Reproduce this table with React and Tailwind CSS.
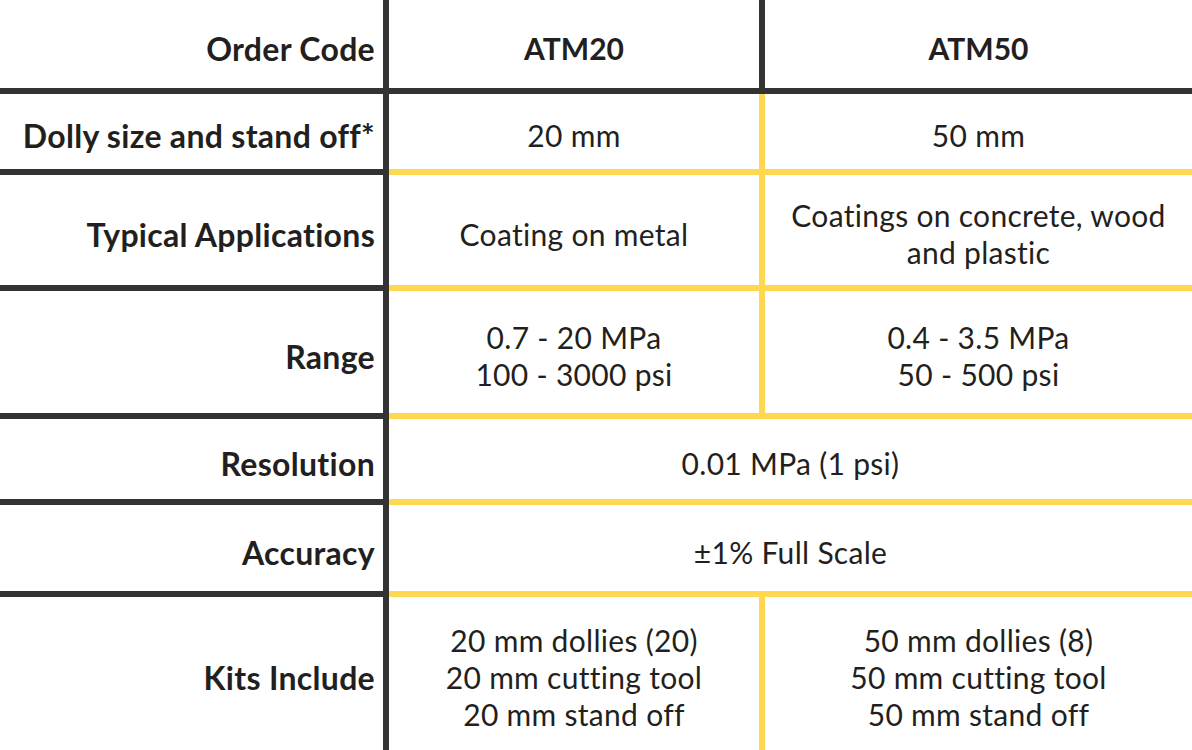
import React from 'react';

const dark = 'border-[#333333]';
const yellow = 'border-[#ffd84f]';

function Label({ children, last }) {
  return (
    <div
      className={`flex items-center justify-end pr-[8px] pt-[8px] border-r-[6px] ${dark} ${last ? '' : 'border-b-[6px]'} font-bold text-[32px] tracking-[0.3px] leading-[37px] text-right`}
    >
      {children}
    </div>
  );
}

function Cell({ children, right, span, last, head }) {
  const border = head ? dark : yellow;
  return (
    <div
      className={`flex items-center justify-center text-center pt-[8px] ${span ? 'col-span-2' : ''} ${right ? 'border-r-[6px]' : ''} ${last ? '' : 'border-b-[6px]'} ${border} ${head ? 'font-bold text-[30px]' : 'text-[30px] tracking-[0.3px]'} leading-[37px]`}
    >
      <div>{children}</div>
    </div>
  );
}

export default function App() {
  return (
    <div
      className="w-[1192px] h-[750px] bg-white text-[#231f20] overflow-hidden [font-variant-ligatures:none]"
      style={{ fontFamily: 'Lato, "Open Sans", sans-serif' }}
    >
      <div className="grid grid-cols-[389px_376px_1fr] grid-rows-[94px_81px_116px_128px_86px_92px_153px] h-full">
        <Label>Order Code</Label>
        <Cell head right>ATM20</Cell>
        <Cell head>ATM50</Cell>

        <Label>Dolly size and stand off*</Label>
        <Cell right>20 mm</Cell>
        <Cell>50 mm</Cell>

        <Label>Typical Applications</Label>
        <Cell right>Coating on metal</Cell>
        <Cell>
          Coatings on concrete, wood
          <br />
          and plastic
        </Cell>

        <Label>Range</Label>
        <Cell right>
          0.7 - 20 MPa
          <br />
          100 - 3000 psi
        </Cell>
        <Cell>
          0.4 - 3.5 MPa
          <br />
          50 - 500 psi
        </Cell>

        <Label>Resolution</Label>
        <Cell span>0.01 MPa (1 psi)</Cell>

        <Label>Accuracy</Label>
        <Cell span>±1% Full Scale</Cell>

        <Label last>Kits Include</Label>
        <Cell right last>
          20 mm dollies (20)
          <br />
          20 mm cutting tool
          <br />
          20 mm stand off
        </Cell>
        <Cell last>
          50 mm dollies (8)
          <br />
          50 mm cutting tool
          <br />
          50 mm stand off
        </Cell>
      </div>
    </div>
  );
}
